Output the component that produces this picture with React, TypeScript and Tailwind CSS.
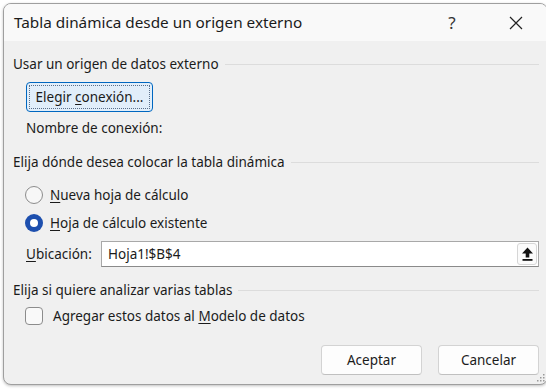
import React from "react";

const font = { fontFamily: '"Noto Sans", "Open Sans", sans-serif' };

const Heading: React.FC<{ text: string; mt: string }> = ({ text, mt }) => (
  <div className={`flex items-center h-[20px] ${mt}`}>
    <span className="whitespace-nowrap">{text}</span>
    <div className="flex-1 h-px bg-[#dcdcdc] ml-[6px]" />
  </div>
);

const Radio: React.FC<{ checked?: boolean; children: React.ReactNode; mt: string }> = ({
  checked,
  children,
  mt,
}) => (
  <div className={`flex items-center h-[20px] pl-[12px] ${mt}`}>
    {checked ? (
      <div className="w-[18px] h-[18px] rounded-full bg-[#1d4fae] flex items-center justify-center">
        <div className="w-[8px] h-[8px] rounded-full bg-white" />
      </div>
    ) : (
      <div className="w-[18px] h-[18px] rounded-full border border-[#8c8c8c] bg-[#f7f7f7]" />
    )}
    <span className="ml-[7px] whitespace-nowrap">{children}</span>
  </div>
);

export default function App() {
  return (
    <div className="w-[546px] h-[389px] bg-white overflow-hidden pt-[3px] pl-[3px] text-[#1b1b1b]" style={font}>
      <div className="relative w-[545px] h-[382px] rounded-[8px] border border-[#9f9f9f] bg-[#f0f0f0] overflow-hidden shadow-[0_1px_3px_rgba(0,0,0,0.25)]">
        {/* title bar */}
        <div className="flex items-center h-[37px] bg-[#f9f9f9] pl-[10px] pr-[23px]">
          <span className="text-[15.3px] whitespace-nowrap">Tabla dinámica desde un origen externo</span>
          <div className="flex-1" />
          <span className="text-[17px] text-[#333] w-[14px] text-center">?</span>
          <div className="w-[49px]" />
          <svg width="16" height="16" viewBox="0 0 16 16">
            <path d="M2 2 L14 14 M14 2 L2 14" stroke="#222" strokeWidth="1.2" />
          </svg>
        </div>

        {/* body */}
        <div className="flex flex-col pl-[9px] pr-[8px] text-[13.5px]">
          <Heading text="Usar un origen de datos externo" mt="mt-[13px]" />

          <div className="mt-[8px] pl-[13px]">
            <div className="w-[127px] h-[30px] rounded-[4px] border border-[#0067c0] bg-[#e1eefa] p-[2px]">
              <div className="w-full h-full border border-dotted border-[#5a6f8a] flex items-center justify-center">
                <span className="whitespace-nowrap">
                  Elegir <span className="underline underline-offset-2">c</span>onexión...
                </span>
              </div>
            </div>
          </div>

          <div className="flex items-center h-[20px] mt-[6px] pl-[13px]">Nombre de conexión:</div>

          <Heading text="Elija dónde desea colocar la tabla dinámica" mt="mt-[14px]" />

          <Radio mt="mt-[13px]">
            <span className="underline underline-offset-2">N</span>ueva hoja de cálculo
          </Radio>
          <Radio checked mt="mt-[8px]">
            <span className="underline underline-offset-2">H</span>oja de cálculo existente
          </Radio>

          <div className="flex items-center h-[26px] mt-[8px] pl-[13px]">
            <span className="w-[75px] whitespace-nowrap">
              <span className="underline underline-offset-2">U</span>bicación:
            </span>
            <div className="flex-1 h-[26px] bg-white border border-[#a8a8a8] border-b-[#8a8a8a] flex items-center pl-[6px] pr-[1px]">
              <span className="flex-1 whitespace-nowrap">Hoja1!$B$4</span>
              <div className="w-[20px] h-[22px] rounded-[3px] border border-[#d6d6d6] bg-[#fbfbfb] flex items-center justify-center">
                <svg width="13" height="16" viewBox="0 0 13 16">
                  <path d="M6.5 1.5 L12 7.5 L8.3 7.5 L8.3 11.5 L4.7 11.5 L4.7 7.5 L1 7.5 Z" fill="#111" />
                  <rect x="1.5" y="13" width="10" height="1.8" fill="#111" />
                </svg>
              </div>
            </div>
          </div>

          <Heading text="Elija si quiere analizar varias tablas" mt="mt-[13px]" />

          <div className="flex items-center h-[20px] mt-[6px] pl-[12px]">
            <div className="w-[18px] h-[18px] rounded-[4px] border border-[#8c8c8c] bg-[#f9f9f9]" />
            <span className="ml-[10px] whitespace-nowrap">
              Agregar estos datos al <span className="underline underline-offset-2">M</span>odelo de datos
            </span>
          </div>

          <div className="flex justify-end gap-[16px] mt-[19px]">
            <div className="w-[101px] h-[30px] rounded-[4px] border border-[#d3d3d3] border-b-[#c0c0c0] bg-[#fdfdfd] flex items-center justify-center">
              Aceptar
            </div>
            <div className="w-[101px] h-[30px] rounded-[4px] border border-[#d3d3d3] border-b-[#c0c0c0] bg-[#fdfdfd] flex items-center justify-center">
              Cancelar
            </div>
          </div>
        </div>

        {/* resize grip */}
        <svg width="8" height="8" viewBox="0 0 8 8" className="absolute right-[2px] bottom-[2px]">
          <rect x="6" y="0" width="1.5" height="1.5" fill="#9a9a9a" />
          <rect x="3" y="3" width="1.5" height="1.5" fill="#9a9a9a" />
          <rect x="6" y="3" width="1.5" height="1.5" fill="#9a9a9a" />
          <rect x="0" y="6" width="1.5" height="1.5" fill="#9a9a9a" />
          <rect x="3" y="6" width="1.5" height="1.5" fill="#9a9a9a" />
          <rect x="6" y="6" width="1.5" height="1.5" fill="#9a9a9a" />
        </svg>
      </div>
    </div>
  );
}
